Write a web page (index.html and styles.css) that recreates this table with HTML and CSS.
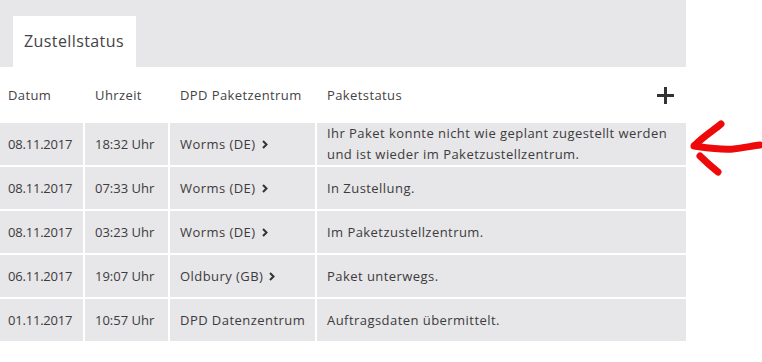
FILE: index.html
```html
<!DOCTYPE html>
<html lang="de">
<head>
<meta charset="utf-8">
<title>Zustellstatus</title>
<link rel="stylesheet" href="styles.css">
</head>
<body>
<div class="page">
  <div class="panel">
    <div class="tabs">
      <div class="tab">Zustellstatus</div>
    </div>
    <div class="table">
      <div class="th">Datum</div>
      <div class="th">Uhrzeit</div>
      <div class="th">DPD Paketzentrum</div>
      <div class="th th-last">Paketstatus
        <svg class="plus" width="17" height="17" viewBox="0 0 17 17"><path d="M8.5 0v17M0 8.5h17" stroke="#333" stroke-width="3"/></svg>
      </div>

      <div class="td c1">08.11.2017</div>
      <div class="td">18:32 Uhr</div>
      <div class="td loc">Worms (DE)<svg class="chev" width="6" height="9" viewBox="0 0 6 9"><path d="M1 1l3.5 3.5L1 8" fill="none" stroke="#333" stroke-width="2"/></svg></div>
      <div class="td status">Ihr Paket konnte nicht wie geplant zugestellt werden<br>und ist wieder im Paketzustellzentrum.</div>

      <div class="td c1">08.11.2017</div>
      <div class="td">07:33 Uhr</div>
      <div class="td loc">Worms (DE)<svg class="chev" width="6" height="9" viewBox="0 0 6 9"><path d="M1 1l3.5 3.5L1 8" fill="none" stroke="#333" stroke-width="2"/></svg></div>
      <div class="td status">In Zustellung.</div>

      <div class="td c1">08.11.2017</div>
      <div class="td">03:23 Uhr</div>
      <div class="td loc">Worms (DE)<svg class="chev" width="6" height="9" viewBox="0 0 6 9"><path d="M1 1l3.5 3.5L1 8" fill="none" stroke="#333" stroke-width="2"/></svg></div>
      <div class="td status">Im Paketzustellzentrum.</div>

      <div class="td c1">06.11.2017</div>
      <div class="td">19:07 Uhr</div>
      <div class="td loc">Oldbury (GB)<svg class="chev" width="6" height="9" viewBox="0 0 6 9"><path d="M1 1l3.5 3.5L1 8" fill="none" stroke="#333" stroke-width="2"/></svg></div>
      <div class="td status">Paket unterwegs.</div>

      <div class="td c1">01.11.2017</div>
      <div class="td">10:57 Uhr</div>
      <div class="td loc">DPD Datenzentrum</div>
      <div class="td status">Auftragsdaten übermittelt.</div>
    </div>
  </div>
  <svg class="arrow" width="76" height="60" viewBox="0 0 76 60">
    <g fill="none" stroke="#ee0a0a" stroke-width="7" stroke-linecap="round" stroke-linejoin="round">
      <path d="M33 4 C26 10 16 16 7 25"/>
      <path d="M6 26 C20 28 32 30 45 29 C55 28 64 26 72 25"/>
      <path d="M12 36 C18 42 25 48 30 52"/>
    </g>
  </svg>
</div>
</body>
</html>
```
FILE: styles.css
```css
html, body {
  margin: 0;
  padding: 0;
  background: #ffffff;
}
body {
  font-family: "Open Sans", "Liberation Sans", sans-serif;
  color: #3c3b3d;
}
.page {
  position: relative;
  width: 762px;
  height: 362px;
}
.panel {
  width: 686px;
  background: #e7e6e8;
}
.tabs {
  display: flex;
  padding: 16px 0 0 13px;
}
.tab {
  background: #ffffff;
  height: 51px;
  width: 123px;
  box-sizing: border-box;
  padding: 0 0 2px 11px;
  display: flex;
  align-items: center;
  font-size: 16px;
  color: #444345;
  letter-spacing: 0.4px;
}
.table {
  display: grid;
  grid-template-columns: 83px 83px 145px 1fr;
  grid-template-rows: 54px repeat(5, 42px);
  gap: 2px;
  background: #ffffff;
  font-size: 13px;
}
.th {
  background: #ffffff;
  display: flex;
  align-items: center;
  padding: 2px 0 0 10px;
  color: #444345;
  letter-spacing: 0.4px;
}
.th:first-child {
  padding-left: 8px;
}
.th-last {
  justify-content: space-between;
  padding-right: 12px;
}
.plus {
  display: block;
}
.td {
  background: #e7e6e8;
  display: flex;
  align-items: center;
  padding-left: 10px;
  line-height: 21px;
  color: #3c3b3d;
}
.td.c1 {
  padding-left: 8px;
  letter-spacing: -0.2px;
}
.td.loc,
.td.status {
  letter-spacing: 0.45px;
}
.chev {
  margin-left: 6px;
}
.arrow {
  position: absolute;
  left: 688px;
  top: 120px;
}
```
